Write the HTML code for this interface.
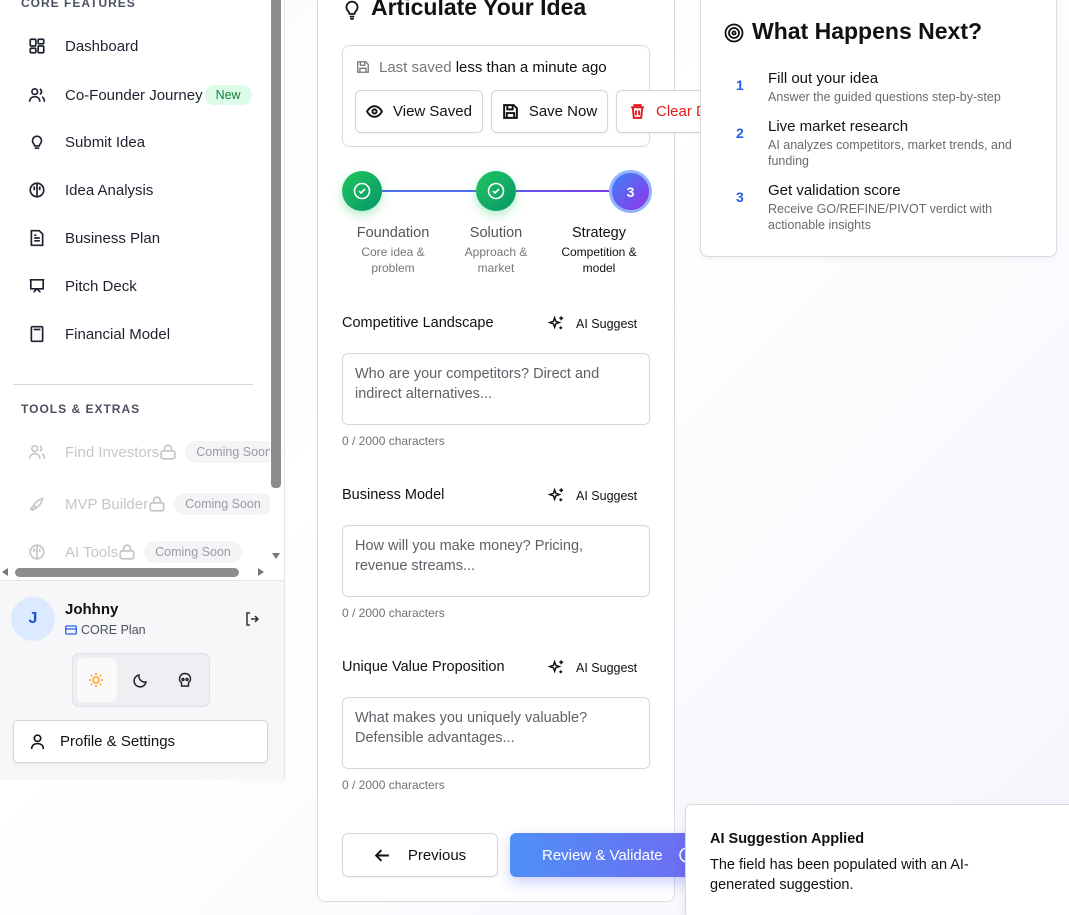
<!DOCTYPE html>
<html style="overflow:hidden;width:1069px;height:915px"><head><meta charset="utf-8"><style>
*{box-sizing:border-box;margin:0;padding:0}
body{width:1069px;height:915px;overflow:hidden;position:relative;font-family:"Liberation Sans",sans-serif;background:linear-gradient(135deg,#fbf9fd 0%,#fff 40%,#f6f5fd 100%);color:#111}
.abs{position:absolute}
.side{left:0;top:0;width:285px;height:780px;background:#fff;border-right:1px solid #e6e6ea}
.nav{position:absolute;left:28px;font-size:15px;color:#1e2230;display:flex;align-items:center}
.nav svg{width:18px;height:18px;flex:none;margin-right:19px;stroke:#1e2230;fill:none;stroke-width:1.5}
.dis{color:#c4c6cc}.dis svg{stroke:#c4c6cc}
.pill{display:inline-block;background:#f3f4f6;color:#9a9ca3;font-size:12.5px;padding:4px 11px;border-radius:12px;margin-left:10px;white-space:nowrap}
.sect{position:absolute;left:21px;font-size:12px;letter-spacing:1px;color:#4a5060;font-weight:bold}
.card{background:#fff;border:1px solid #dcdce0;border-radius:8px}
.btn{position:absolute;height:43px;border:1px solid #d6d6da;border-radius:6px;background:#fff;display:flex;align-items:center;justify-content:center;font-size:15px;color:#111;box-shadow:0 1px 2px rgba(0,0,0,.05);white-space:nowrap}
.btn svg{width:17px;height:17px;flex:none;stroke:#111;fill:none;stroke-width:1.8;margin-right:10px}
.lbl{position:absolute;left:342px;font-size:14.5px;color:#111}
.ai{position:absolute;left:548px;font-size:12.5px;color:#111;display:flex;align-items:center}
.ai svg{width:17px;height:17px;stroke:#111;fill:none;stroke-width:1.6;margin-right:11px}
.ta{position:absolute;left:342px;width:308px;height:72px;border:1px solid #d6d6da;border-radius:6px;padding:10px 40px 10px 12px;font-size:14.5px;line-height:20px;color:#5f6168}
.cnt{position:absolute;left:342px;font-size:12px;color:#6f7177}
.circ{position:absolute;width:40px;height:40px;border-radius:50%;display:flex;align-items:center;justify-content:center}
.st{position:absolute;text-align:center;width:110px}
.st b{display:block;font-weight:normal;font-size:14.5px;color:#555}
.st span{display:block;font-size:12px;color:#777;line-height:16px;margin-top:3px}
.num{position:absolute;left:736px;color:#1f5ee8;font-weight:bold;font-size:14px}
.it{position:absolute;left:768px}
.it b{display:block;font-weight:normal;font-size:15px;color:#111}
.it span{display:block;font-size:12.5px;color:#6a6a70;line-height:16px;margin-top:2px}
</style></head><body>

<div class="abs side"></div>
<div class="sect" style="top:-4px">CORE FEATURES</div>
<div class="nav" style="top:37px"><svg viewBox="0 0 16 16"><rect x="2" y="2" width="5" height="6" rx="1"/><rect x="9" y="2" width="5" height="4" rx="1"/><rect x="2" y="10" width="5" height="4" rx="1"/><rect x="9" y="8" width="5" height="6" rx="1"/></svg>Dashboard</div>
<div class="nav" style="top:85px"><svg viewBox="0 0 16 16"><circle cx="6" cy="5" r="2.5"/><path d="M1.5 14c0-3 2-4.5 4.5-4.5s4.5 1.5 4.5 4.5M10.5 2.7a2.5 2.5 0 010 4.6M12.5 9.8c1.3.6 2 1.9 2 4.2"/></svg>Co-Founder Journey<span style="background:#dcfce7;color:#15803d;font-size:12.5px;padding:3px 11px;border-radius:12px;margin-left:2px">New</span></div>
<div class="nav" style="top:133px"><svg viewBox="0 0 16 16"><path d="M5 9.5a4 4 0 116 0c-.6.7-1 1.3-1 2H6c0-.7-.4-1.3-1-2zM6 13.5h4"/></svg>Submit Idea</div>
<div class="nav" style="top:181px"><svg viewBox="0 0 16 16"><circle cx="8" cy="8" r="6"/><path d="M8 2v12M5 5c1 1 1 2 0 3M11 5c-1 1-1 2 0 3"/></svg>Idea Analysis</div>
<div class="nav" style="top:229px"><svg viewBox="0 0 16 16"><path d="M3 1.5h7l3 3v10H3zM5.5 8h5M5.5 10.5h5M5.5 5.5h2"/></svg>Business Plan</div>
<div class="nav" style="top:277px"><svg viewBox="0 0 16 16"><path d="M1.5 2.5h13M2.5 2.5v8h11v-8M8 10.5l-3 3M8 10.5l3 3"/></svg>Pitch Deck</div>
<div class="nav" style="top:325px"><svg viewBox="0 0 16 16"><rect x="3" y="1.5" width="10" height="13" rx="1"/><path d="M5 4h6M5.5 7.5h.1M8 7.5h.1M10.5 7.5h.1M5.5 10h.1M8 10h.1M10.5 10h.1M5.5 12.5h.1M8 12.5h.1M10.5 12.5h.1"/></svg>Financial Model</div>
<div class="abs" style="left:13px;top:384px;width:240px;height:1px;background:#d8d8dc"></div>
<div class="sect" style="top:402px">TOOLS &amp; EXTRAS</div>
<div class="nav dis" style="top:441px"><svg viewBox="0 0 16 16"><circle cx="6" cy="5" r="2.5"/><path d="M1.5 14c0-3 2-4.5 4.5-4.5s4.5 1.5 4.5 4.5M10.5 2.7a2.5 2.5 0 010 4.6M12.5 9.8c1.3.6 2 1.9 2 4.2"/></svg>Find Investors<svg viewBox="0 0 16 16" style="margin:0"><rect x="2" y="7" width="12" height="7" rx="1.5"/><path d="M5 7V5a3 3 0 016 0v2"/></svg><span class="pill" style="margin-left:8px">Coming Soon</span></div>
<div class="nav dis" style="top:493px"><svg viewBox="0 0 16 16"><path d="M3 13c1-3 4-8 10-10-1 6-6 9-9 10zM5 9l2 2M2 11l3 3"/></svg>MVP Builder<svg viewBox="0 0 16 16" style="margin:0"><rect x="2" y="7" width="12" height="7" rx="1.5"/><path d="M5 7V5a3 3 0 016 0v2"/></svg><span class="pill" style="margin-left:8px">Coming Soon</span></div>
<div class="nav dis" style="top:541px"><svg viewBox="0 0 16 16"><circle cx="8" cy="8" r="6"/><path d="M8 2v12M5 5c1 1 1 2 0 3M11 5c-1 1-1 2 0 3"/></svg>AI Tools<svg viewBox="0 0 16 16" style="margin:0"><rect x="2" y="7" width="12" height="7" rx="1.5"/><path d="M5 7V5a3 3 0 016 0v2"/></svg><span class="pill" style="margin-left:8px">Coming Soon</span></div>
<!-- scrollbars -->
<div class="abs" style="left:270px;top:0;width:12px;height:566px;background:#fff"></div>
<div class="abs" style="left:271px;top:0;width:10px;height:488px;background:#8d8d8d;border-radius:0 0 4px 4px"></div>
<div class="abs" style="left:272px;top:553px;width:0;height:0;border-left:4px solid transparent;border-right:4px solid transparent;border-top:6px solid #777"></div>
<div class="abs" style="left:0;top:564px;width:270px;height:16px;background:#fff"></div>
<div class="abs" style="left:15px;top:568px;width:224px;height:9px;background:#8d8d8d;border-radius:5px"></div>
<div class="abs" style="left:2px;top:568px;border-top:4px solid transparent;border-bottom:4px solid transparent;border-right:6px solid #777"></div>
<div class="abs" style="left:258px;top:568px;border-top:4px solid transparent;border-bottom:4px solid transparent;border-left:6px solid #777"></div>
<!-- user -->
<div class="abs" style="left:0;top:580px;width:284px;height:200px;background:#f7f7fa;border-top:1px solid #e6e6ea"></div>
<div class="abs" style="left:11px;top:597px;width:44px;height:44px;border-radius:50%;background:#dbeafe;color:#1d4ed8;font-weight:bold;font-size:16px;display:flex;align-items:center;justify-content:center">J</div>
<div class="abs" style="left:65px;top:601px;font-weight:bold;font-size:15px">Johhny</div>
<div class="abs" style="left:65px;top:623px;font-size:12.5px;color:#4a5060;display:flex;align-items:center"><svg width="12" height="10" viewBox="0 0 12 10" style="margin-right:4px"><rect x=".7" y="1" width="10.6" height="8" rx="1" fill="none" stroke="#2563eb" stroke-width="1.3"/><path d="M1 4h10" stroke="#2563eb" stroke-width="1.3"/></svg>CORE Plan</div>
<svg class="abs" style="left:244px;top:611px" width="16" height="16" viewBox="0 0 16 16" fill="none" stroke="#333" stroke-width="1.5"><path d="M6 2H3v12h3M7 8h7M11 5l3 3-3 3"/></svg>
<div class="abs" style="left:72px;top:653px;width:138px;height:54px;background:#efeff3;border:1px solid #e0e0e5;border-radius:7px"></div>
<div class="abs" style="left:77px;top:658px;width:40px;height:44px;background:#fafafa;border-radius:6px"></div>
<svg class="abs" style="left:88px;top:672px" width="16" height="16" viewBox="0 0 16 16" fill="none" stroke="#f59e0b" stroke-width="1.5"><circle cx="8" cy="8" r="3"/><path d="M8 1v2M8 13v2M1 8h2M13 8h2M3 3l1.4 1.4M11.6 11.6L13 13M3 13l1.4-1.4M11.6 4.4L13 3"/></svg>
<svg class="abs" style="left:133px;top:672px" width="16" height="16" viewBox="0 0 16 16" fill="none" stroke="#1e2230" stroke-width="1.5"><path d="M13 10A6 6 0 016 3a6 6 0 107 7z"/></svg>
<svg class="abs" style="left:177px;top:672px" width="16" height="16" viewBox="0 0 16 16" fill="none" stroke="#1e2230" stroke-width="1.4"><path d="M8 1.5c-3.5 0-5.5 2.5-5.5 5.5 0 2 1 3 2 3.5V14h7v-3.5c1-.5 2-1.5 2-3.5 0-3-2-5.5-5.5-5.5z"/><circle cx="6" cy="7.5" r="1"/><circle cx="10" cy="7.5" r="1"/></svg>
<div class="abs" style="left:13px;top:720px;width:255px;height:43px;background:#fff;border:1px solid #d6d6da;border-radius:5px;box-shadow:0 1px 3px rgba(0,0,0,.08);display:flex;align-items:center;padding-left:15px;font-size:15px"><svg width="17" height="17" viewBox="0 0 16 16" fill="none" stroke="#111" stroke-width="1.5" style="margin-right:14px"><circle cx="8" cy="5" r="3"/><path d="M2.5 15c0-3.5 2.5-5 5.5-5s5.5 1.5 5.5 5"/></svg>Profile &amp; Settings</div>

<!-- main card -->
<div class="abs card" style="left:317px;top:-20px;width:358px;height:922px"></div>
<svg class="abs" style="left:343px;top:0" width="18" height="20" viewBox="0 0 16 18" fill="none" stroke="#111" stroke-width="1.6"><path d="M4.5 10a5 5 0 117 0c-.7.8-1.2 1.5-1.2 2.5H5.7c0-1-.5-1.7-1.2-2.5zM6 15h4M6.5 17h3"/></svg>
<div class="abs" style="left:371px;top:-6px;font-size:23px;font-weight:bold">Articulate Your Idea</div>
<div class="abs card" style="left:342px;top:45px;width:308px;height:102px;border-color:#d8d8dc"></div>
<svg class="abs" style="left:356px;top:60px" width="14" height="14" viewBox="0 0 16 16" fill="none" stroke="#777" stroke-width="1.5"><path d="M2 2h9l3 3v9H2zM5 2v4h5V2M4.5 14V9.5h7V14"/></svg>
<div class="abs" style="left:379px;top:59px;font-size:15px;color:#777">Last saved <span style="color:#111">less than a minute ago</span></div>
<div class="btn" style="left:355px;top:90px;width:128px"><svg viewBox="0 0 16 16"><path d="M1 8s2.5-5 7-5 7 5 7 5-2.5 5-7 5-7-5-7-5z"/><circle cx="8" cy="8" r="2"/></svg>View Saved</div>
<div class="btn" style="left:491px;top:90px;width:117px"><svg viewBox="0 0 16 16"><path d="M2 2h9l3 3v9H2zM5 2v4h5V2M4.5 14V9.5h7V14"/></svg>Save Now</div>
<div class="btn" style="left:616px;top:90px;width:100px;justify-content:flex-start;padding-left:12px;color:#e11d1d;border-right:none;border-radius:6px 0 0 6px"><svg viewBox="0 0 16 16" style="stroke:#e11d1d;fill:none"><path d="M2 4h12M5 4V2h6v2M3.5 4l1 10h7l1-10M6.5 7v4.5M9.5 7v4.5"/></svg>Clear Draft</div>

<!-- stepper -->
<div class="abs" style="left:380px;top:190px;width:120px;height:2px;background:#4f6bef"></div>
<div class="abs" style="left:495px;top:190px;width:125px;height:2px;background:linear-gradient(90deg,#5b5cf0,#7c3aed)"></div>
<div class="circ" style="left:342px;top:171px;background:linear-gradient(135deg,#22c55e,#059669);box-shadow:0 4px 10px rgba(34,197,94,.35)"><svg width="18" height="18" viewBox="0 0 18 18" fill="none" stroke="#fff" stroke-width="1.6"><circle cx="9" cy="9" r="7.5"/><path d="M6 9l2 2 4-4"/></svg></div>
<div class="circ" style="left:476px;top:171px;background:linear-gradient(135deg,#22c55e,#059669);box-shadow:0 4px 10px rgba(34,197,94,.35)"><svg width="18" height="18" viewBox="0 0 18 18" fill="none" stroke="#fff" stroke-width="1.6"><circle cx="9" cy="9" r="7.5"/><path d="M6 9l2 2 4-4"/></svg></div>
<div class="circ" style="left:609px;top:170px;width:43px;height:43px;background:linear-gradient(135deg,#3b82f6,#9333ea);border:3px solid #93b4fb;color:#fff;font-weight:bold;font-size:14px">3</div>
<div class="st" style="left:338px;top:225px"><b>Foundation</b><span>Core idea &amp;<br>problem</span></div>
<div class="st" style="left:441px;top:225px"><b>Solution</b><span>Approach &amp;<br>market</span></div>
<div class="st" style="left:544px;top:225px"><b style="color:#111">Strategy</b><span style="color:#111">Competition &amp;<br>model</span></div>

<!-- fields -->
<div class="lbl" style="top:315px">Competitive Landscape</div>
<div class="ai" style="top:315px"><svg viewBox="0 0 18 18"><path d="M7 3l1.3 3.7L12 8l-3.7 1.3L7 13l-1.3-3.7L2 8l3.7-1.3zM14 1.5v4M12 3.5h4M13.5 12v3M12 13.5h3"/></svg>AI Suggest</div>
<div class="ta" style="top:353px">Who are your competitors? Direct and indirect alternatives...</div>
<div class="cnt" style="top:434px">0 / 2000 characters</div>

<div class="lbl" style="top:487px">Business Model</div>
<div class="ai" style="top:487px"><svg viewBox="0 0 18 18"><path d="M7 3l1.3 3.7L12 8l-3.7 1.3L7 13l-1.3-3.7L2 8l3.7-1.3zM14 1.5v4M12 3.5h4M13.5 12v3M12 13.5h3"/></svg>AI Suggest</div>
<div class="ta" style="top:525px">How will you make money? Pricing, revenue streams...</div>
<div class="cnt" style="top:606px">0 / 2000 characters</div>

<div class="lbl" style="top:659px">Unique Value Proposition</div>
<div class="ai" style="top:659px"><svg viewBox="0 0 18 18"><path d="M7 3l1.3 3.7L12 8l-3.7 1.3L7 13l-1.3-3.7L2 8l3.7-1.3zM14 1.5v4M12 3.5h4M13.5 12v3M12 13.5h3"/></svg>AI Suggest</div>
<div class="ta" style="top:697px">What makes you uniquely valuable? Defensible advantages...</div>
<div class="cnt" style="top:778px">0 / 2000 characters</div>

<div class="btn" style="left:342px;top:833px;width:156px;height:44px"><svg viewBox="0 0 16 16" style="margin-right:17px"><path d="M14 8H2M7 3L2 8l5 5"/></svg>Previous</div>
<div class="abs" style="left:510px;top:833px;width:190px;height:44px;border-radius:6px;background:linear-gradient(90deg,#4f8ff7,#6f6cf2);box-shadow:0 6px 14px rgba(99,102,241,.3);color:#fff;font-size:15px;display:flex;align-items:center;padding-left:32px">Review &amp; Validate<svg width="16" height="16" viewBox="0 0 16 16" fill="none" stroke="#fff" stroke-width="1.5" style="margin-left:16px"><circle cx="8" cy="8" r="7"/></svg></div>

<!-- right card -->
<div class="abs card" style="left:700px;top:-10px;width:357px;height:267px;box-shadow:0 2px 6px rgba(0,0,0,.05)"></div>
<svg class="abs" style="left:724px;top:23px" width="20" height="20" viewBox="0 0 20 20" fill="none" stroke="#111" stroke-width="1.8"><circle cx="10" cy="10" r="8.5"/><circle cx="10" cy="10" r="5"/><circle cx="10" cy="10" r="1.6"/></svg>
<div class="abs" style="left:752px;top:18px;font-size:23px;font-weight:bold">What Happens Next?</div>
<div class="num" style="top:77px">1</div>
<div class="it" style="top:70px"><b>Fill out your idea</b><span>Answer the guided questions step-by-step</span></div>
<div class="num" style="top:125px">2</div>
<div class="it" style="top:118px"><b>Live market research</b><span>AI analyzes competitors, market trends, and<br>funding</span></div>
<div class="num" style="top:189px">3</div>
<div class="it" style="top:182px"><b>Get validation score</b><span>Receive GO/REFINE/PIVOT verdict with<br>actionable insights</span></div>

<!-- toast -->
<div class="abs" style="left:685px;top:804px;width:400px;height:115px;background:#fff;border:1px solid #d8d8dc;border-radius:6px;box-shadow:0 4px 12px rgba(0,0,0,.08)"></div>
<div class="abs" style="left:710px;top:831px;font-size:14.5px;font-weight:bold;color:#111">AI Suggestion Applied</div>
<div class="abs" style="left:710px;top:855px;font-size:14.5px;line-height:20px;color:#111;width:300px">The field has been populated with an AI-<br>generated suggestion.</div>
</body></html>
